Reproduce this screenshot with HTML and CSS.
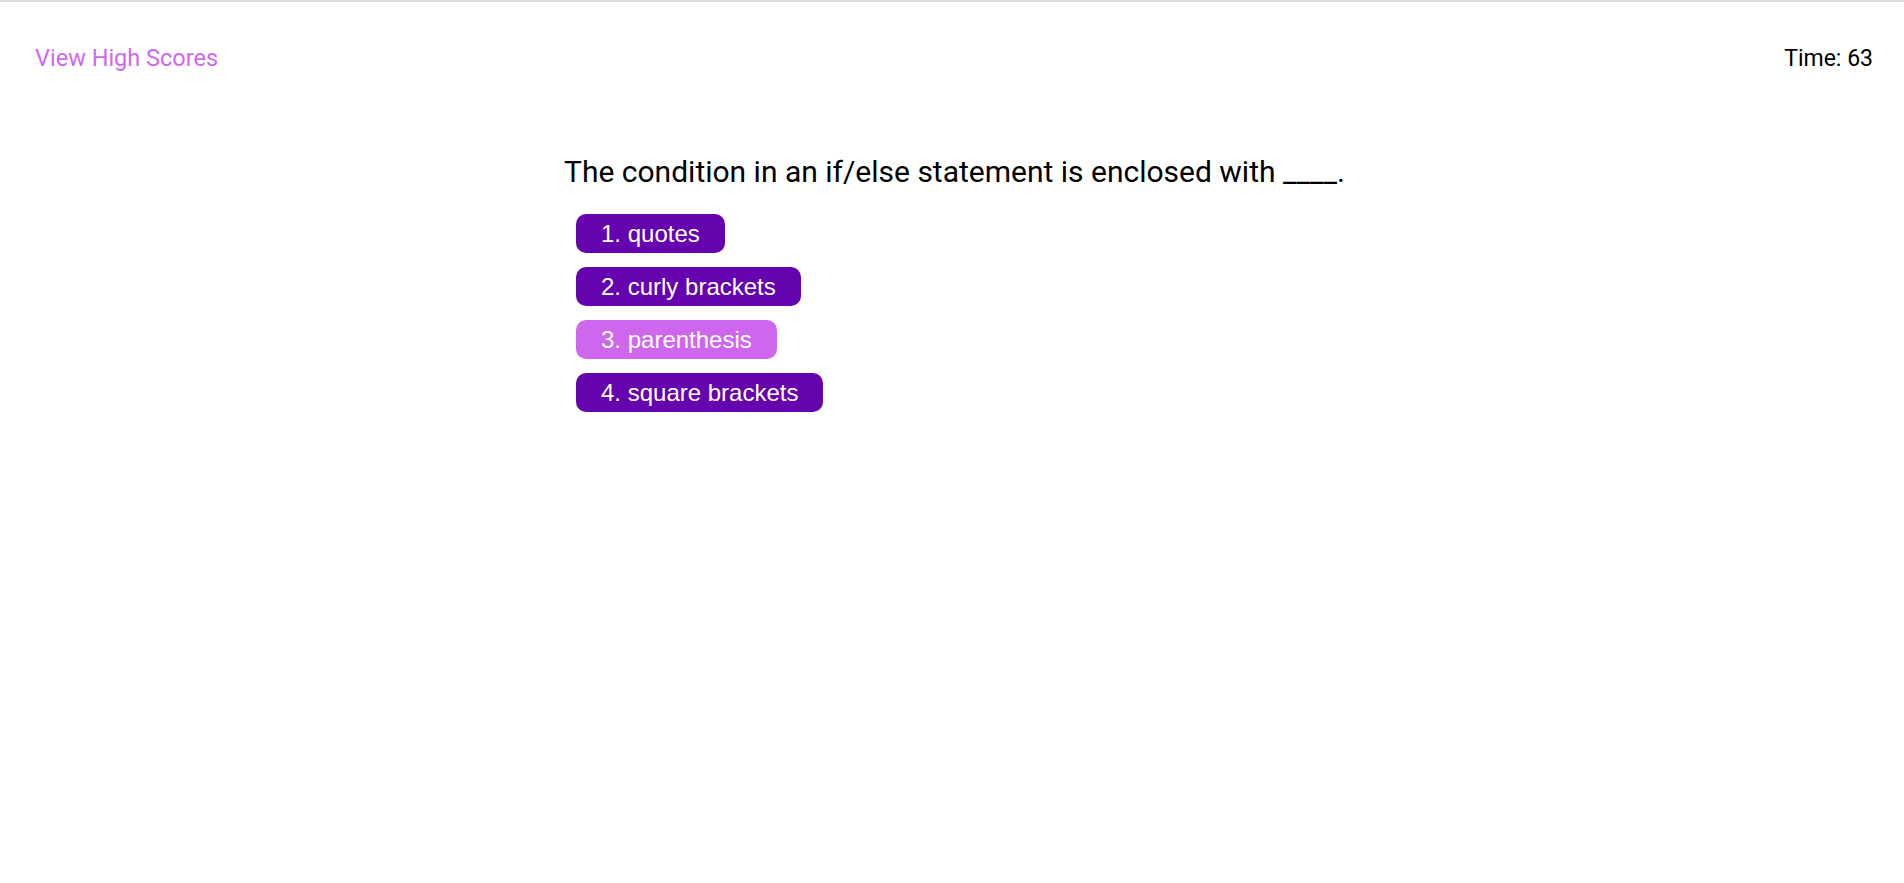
FILE: index.html
```html
<!DOCTYPE html>
<html lang="en">
<head>
<meta charset="utf-8">
<title>Code Quiz</title>
<link rel="stylesheet" href="styles.css">
</head>
<body>
<header class="top-bar">
  <a class="high-scores" href="#">View High Scores</a>
  <div class="timer">Time: 63</div>
</header>
<main class="quiz">
  <section class="question-card">
    <h2 class="question">The condition in an if/else statement is enclosed with ____.</h2>
    <div class="choices">
      <button class="choice">1. quotes</button>
      <button class="choice">2. curly brackets</button>
      <button class="choice choice-active">3. parenthesis</button>
      <button class="choice">4. square brackets</button>
    </div>
  </section>
</main>
</body>
</html>
```

FILE: styles.css
```css
html, body {
  margin: 0;
  padding: 0;
  background: #ffffff;
}
body {
  border-top: 2px solid #dcdce0;
  font-family: Roboto, "Liberation Sans", Arial, sans-serif;
  color: #000;
  min-height: 881px;
  box-sizing: border-box;
}
.top-bar {
  display: flex;
  justify-content: space-between;
  align-items: center;
  padding: 41px 31px 0 35px;
  height: 30px;
  font-size: 23px;
}
.high-scores {
  color: #d068ef;
  text-decoration: none;
  font-size: 23.5px;
}
.timer {
  color: #000;
}
.quiz {
  display: flex;
  justify-content: center;
  padding: 80px 0 0 5px;
}
.question-card {
  display: flex;
  flex-direction: column;
  align-items: flex-start;
}
.question {
  margin: 0 0 23px 0;
  font-size: 30px;
  font-weight: 400;
  line-height: 38px;
}
.choices {
  display: flex;
  flex-direction: column;
  align-items: flex-start;
  gap: 14px;
  padding-left: 12px;
}
.choice {
  font-family: "Liberation Sans", Arial, sans-serif;
  font-size: 24px;
  color: #fff;
  background: #6504af;
  border: none;
  border-radius: 10px;
  height: 39px;
  padding: 0 25px;
  cursor: pointer;
}
.choice-active {
  background: #cf66ee;
}
```
